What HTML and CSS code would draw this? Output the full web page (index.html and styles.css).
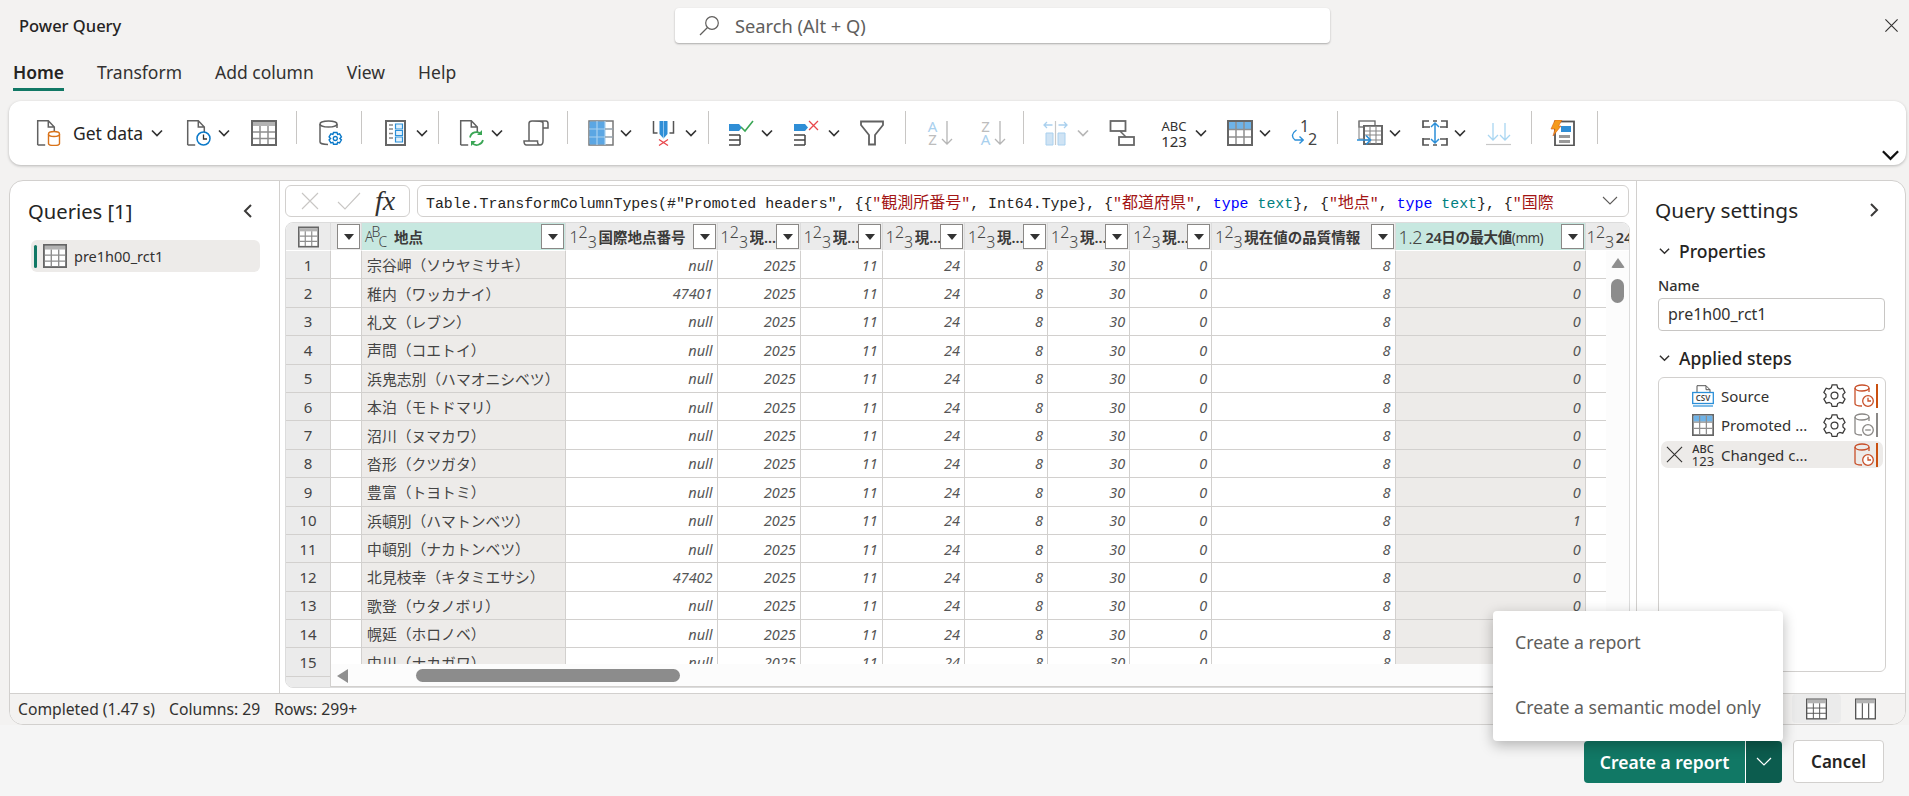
FILE: index.html
```html
<!DOCTYPE html>
<html lang="en">
<head>
<meta charset="utf-8">
<title>Power Query</title>
<link rel="stylesheet" href="styles.css">
</head>
<body>
<svg class="sprite" aria-hidden="true">
  <symbol id="i-doc" viewBox="0 0 26 26"><path d="M1.7 25V.8h10.6l6 6.2v5M12.3.8V7h6M1.7 25h7.5" fill="none" stroke="#616161" stroke-width="1.5"/></symbol>
  <symbol id="i-table" viewBox="0 0 26 26"><rect x="1" y="1" width="24" height="24" fill="#fff" stroke="#666" stroke-width="2"/><rect x="2" y="2" width="22" height="4" fill="#b3b3b3"/><path d="M2 12h22M2 18.500h22M9 6v18M17 6v18" stroke="#8f8f8f" stroke-width="1.500" fill="none"/></symbol>
  <symbol id="i-table-blue" viewBox="0 0 26 26"><rect x="1" y="1" width="24" height="24" fill="#fff" stroke="#666" stroke-width="2"/><rect x="2" y="2" width="22" height="7" fill="#6eb3e8"/><path d="M2 9.500h22M2 17h22M9 2v22M17 2v22" stroke="#8f8f8f" stroke-width="1.500" fill="none"/></symbol>
  <symbol id="i-chev" viewBox="0 0 12 8"><path d="M1 1.500l5 5 5-5" fill="none" stroke="#333" stroke-width="1.700"/></symbol>
  <symbol id="i-gear" viewBox="0 0 24 24"><path d="M9.500 1.500h5l.8 3 2.300 1.300 3-.9 2.400 4.300-2.200 2.200v2.600l2.200 2.200-2.400 4.300-3-.9-2.300 1.300-.8 3h-5l-.8-3-2.300-1.300-3 .9L.9 16.200l2.200-2.200v-2.600L.9 9.200l2.400-4.300 3 .9 2.300-1.300z" transform="translate(0 -.5)" fill="none" stroke="#3b3a39" stroke-width="1.300"/><circle cx="12" cy="12" r="3.600" fill="none" stroke="#3b3a39" stroke-width="1.300"/></symbol>
  <symbol id="i-db-clock" viewBox="0 0 20 24"><path d="M1 4v15.500c0 1.500 3 2.500 7 2.500M15 8V4" fill="none" stroke="#c8502a" stroke-width="1.300"/><ellipse cx="8" cy="4" rx="7" ry="3" fill="none" stroke="#c8502a" stroke-width="1.300"/><circle cx="14" cy="17" r="5.300" fill="#fff" stroke="#c8502a" stroke-width="1.300"/><path d="M14 13.800V17h3" fill="none" stroke="#c8502a" stroke-width="1.300"/></symbol>
  <symbol id="i-db-minus" viewBox="0 0 20 24"><path d="M1 4v15.500c0 1.500 3 2.500 7 2.500M15 8V4" fill="none" stroke="#8a8886" stroke-width="1.300"/><ellipse cx="8" cy="4" rx="7" ry="3" fill="none" stroke="#8a8886" stroke-width="1.300"/><circle cx="14" cy="17" r="5.300" fill="#fff" stroke="#8a8886" stroke-width="1.300"/><path d="M11.200 17h5.600" fill="none" stroke="#8a8886" stroke-width="1.300"/></symbol>
</svg>

<header class="titlebar">
  <div class="app-title">Power Query</div>
  <div class="search">
    <svg class="search-icon" viewBox="0 0 22 22"><circle cx="14" cy="8" r="6.300" fill="none" stroke="#605e5c" stroke-width="1.200"/><path d="M9.500 12.500L2 20" fill="none" stroke="#605e5c" stroke-width="1.200"/></svg>
    <span>Search (Alt + Q)</span>
  </div>
  <svg class="close" viewBox="0 0 16 16"><path d="M1.500 1.500l13 13M14.500 1.500l-13 13" stroke="#323130" stroke-width="1.200" fill="none"/></svg>
</header>

<nav class="tabs">
  <span class="tab active">Home</span>
  <span class="tab">Transform</span>
  <span class="tab">Add column</span>
  <span class="tab">View</span>
  <span class="tab">Help</span>
</nav>

<section class="ribbon">
  <div class="tools">
    <div class="tool">
      <svg class="ic" viewBox="0 0 26 26"><use href="#i-doc"/><path d="M12.500 14v9.500c0 1.500 2.500 2 5.500 2s5.500-.5 5.500-2V14" fill="#fff" stroke="#d9731a" stroke-width="1.400"/><ellipse cx="18" cy="14" rx="5.500" ry="2.500" fill="#fff" stroke="#d9731a" stroke-width="1.400"/></svg>
      <span class="tool-label">Get data</span>
      <svg class="chev c-wide"><use href="#i-chev"/></svg>
    </div>
    <div class="tool">
      <svg class="ic" viewBox="0 0 26 26"><use href="#i-doc"/><circle cx="17.500" cy="18.500" r="6.500" fill="#fff" stroke="#0a78c8" stroke-width="1.500"/><path d="M17.500 14.500v4.500h3.500" fill="none" stroke="#333" stroke-width="1.300"/></svg>
      <svg class="chev"><use href="#i-chev"/></svg>
    </div>
    <div class="tool"><svg class="ic"><use href="#i-table"/></svg></div>
    <div class="sep"></div>
    <div class="tool">
      <svg class="ic" viewBox="0 0 26 26"><path d="M2 4v18c0 1.500 4 2.500 8 2.500M19 8V4" fill="none" stroke="#616161" stroke-width="1.500"/><ellipse cx="10.500" cy="4" rx="8.500" ry="3" fill="none" stroke="#616161" stroke-width="1.500"/><path d="M15.500 12.500h3.500l.6 2 2-.6 1.800 3-1.500 1.500 1.500 1.500-1.800 3-2-.6-.6 2h-3.500l-.6-2-2 .6-1.800-3 1.500-1.500-1.500-1.500 1.800-3 2 .6z" fill="#fff" stroke="#0a78c8" stroke-width="1.400"/><circle cx="17.300" cy="18.500" r="2" fill="none" stroke="#0a78c8" stroke-width="1.300"/></svg>
    </div>
    <div class="sep"></div>
    <div class="tool">
      <svg class="ic" viewBox="0 0 26 26"><rect x="2" y="1" width="19" height="24" fill="#fff" stroke="#666" stroke-width="2"/><path d="M5 5h4M5 9h4M5 13.500h4M5 18h4" stroke="#888" stroke-width="1.300" fill="none"/><path d="M11.500 4h7v5h-7zM11.500 10.500h7v5h-7zM11.500 17h7v5h-7z" fill="#e3f1fb" stroke="#2b8fd8" stroke-width="1.200"/></svg>
      <svg class="chev"><use href="#i-chev"/></svg>
    </div>
    <div class="sep"></div>
    <div class="tool">
      <svg class="ic" viewBox="0 0 26 26"><use href="#i-doc"/><path d="M11 17.500a6.500 6.500 0 0 1 11-3.500M24 20a6.500 6.500 0 0 1-11 3" fill="none" stroke="#3aa655" stroke-width="1.700"/><path d="M23 10v5h-5zM12 26v-5h5z" fill="#3aa655"/></svg>
      <svg class="chev"><use href="#i-chev"/></svg>
    </div>
    <div class="tool">
      <svg class="ic" viewBox="0 0 26 26"><path d="M6 21V3.500C6 2 7 1 9 1h14c1.200 0 2 1 2 3v4h-5V3M9 1c8 0 11 0 11 2M20 8v13c0 2-1 4-3 4H3.500C2 25 1 24 1 21h13.500c0 2 .5 4 2.500 4" fill="none" stroke="#616161" stroke-width="1.500"/></svg>
    </div>
    <div class="sep"></div>
    <div class="tool">
      <svg class="ic" viewBox="0 0 26 26"><rect x="1" y="1" width="24" height="24" fill="#fff" stroke="#777" stroke-width="1.500"/><rect x="1.500" y="1.500" width="15.500" height="23" fill="#5ba6e3"/><path d="M1 9h24M1 17h24M9 1v24M17 1v24" stroke="#a8d0ef" stroke-width="1.200" fill="none"/><path d="M17 9h8M17 17h8" stroke="#888" stroke-width="1.200" fill="none"/></svg>
      <svg class="chev"><use href="#i-chev"/></svg>
    </div>
    <div class="tool">
      <svg class="ic" viewBox="0 0 26 26"><path d="M2.500 1v12h4M22.500 1v12h-4" fill="none" stroke="#555" stroke-width="1.500"/><path d="M8.500 1h8v13l-4 4.500-4-4.500z" fill="#2f8ed6"/><path d="M12.500 1v17" stroke="#8ec4ee" stroke-width="1"/><path d="M8 19.500l9 6M17 19.500l-9 6" stroke="#e8474c" stroke-width="1.300" fill="none"/></svg>
      <svg class="chev c-wide"><use href="#i-chev"/></svg>
    </div>
    <div class="sep"></div>
    <div class="tool">
      <svg class="ic" viewBox="0 0 26 26"><path d="M0 4h10l3 3.500-3 3.500H0z" fill="#2f8ed6"/><path d="M0 15h11M0 20h11M0 25h11M11 15v10" fill="none" stroke="#444" stroke-width="1.500"/><path d="M12 7l4 4 8-10" fill="none" stroke="#3aa655" stroke-width="1.600"/></svg>
      <svg class="chev"><use href="#i-chev"/></svg>
    </div>
    <div class="tool">
      <svg class="ic" viewBox="0 0 26 26"><path d="M0 4h11l3 3.500-3 3.500H0z" fill="#2f8ed6"/><path d="M0 15h11M0 20h11M0 25h11M11 15v10" fill="none" stroke="#444" stroke-width="1.500"/><path d="M15 1l9 9M24 1l-9 9" fill="none" stroke="#e8474c" stroke-width="1.300"/></svg>
      <svg class="chev c-wide"><use href="#i-chev"/></svg>
    </div>
    <div class="tool">
      <svg class="ic" viewBox="0 0 26 26"><path d="M2 1.500h22v3.500l-8 10v9.500h-6V15L2 5z" fill="#fff" stroke="#616161" stroke-width="1.800"/></svg>
    </div>
    <div class="sep"></div>
    <div class="tool sort-tool">
      <span class="letters"><span class="l-blue">A</span><span class="l-grey">Z</span></span>
      <svg class="sort-arrow" viewBox="0 0 12 26"><path d="M6 1v23M1 19l5 5 5-5" fill="none" stroke="#b5b5b5" stroke-width="1.300"/></svg>
    </div>
    <div class="tool sort-tool">
      <span class="letters"><span class="l-grey">Z</span><span class="l-blue">A</span></span>
      <svg class="sort-arrow" viewBox="0 0 12 26"><path d="M6 1v23M1 19l5 5 5-5" fill="none" stroke="#b5b5b5" stroke-width="1.300"/></svg>
    </div>
    <div class="sep"></div>
    <div class="tool">
      <svg class="ic" viewBox="0 0 26 26"><path d="M3 13h7v12H3zM15 13h7v12h-7z" fill="#cfe3f4" stroke="#a9d0ee" stroke-width="1"/><path d="M12.500 1v24" stroke="#c8c8c8" stroke-width="1.200" fill="none"/><path d="M9.500 5H1M4 2L1 5l3 3M15.500 5H24M21 2l3 3-3 3" fill="none" stroke="#a9d0ee" stroke-width="1.300"/></svg>
      <svg class="chev c-wide dim"><use href="#i-chev"/></svg>
    </div>
    <div class="tool">
      <svg class="ic" viewBox="0 0 26 26"><rect x="1.500" y="1" width="15" height="10" fill="#fff" stroke="#666" stroke-width="1.800"/><rect x="10" y="17" width="15" height="8" fill="#fff" stroke="#666" stroke-width="1.800"/><path d="M11 11l6 6" stroke="#666" stroke-width="1.500" fill="none"/></svg>
    </div>
    <div class="tool">
      <div class="abc"><span>ABC</span><span>123</span></div>
      <svg class="chev c-wide"><use href="#i-chev"/></svg>
    </div>
    <div class="tool">
      <svg class="ic"><use href="#i-table-blue"/></svg>
      <svg class="chev"><use href="#i-chev"/></svg>
    </div>
    <div class="tool">
      <svg class="rep-arrow" viewBox="0 0 13 17"><path d="M5.500 1C1 4 0 8 4 11h8M8.500 7.500l3.800 3.500-3.800 3.500" fill="none" stroke="#2b8fd8" stroke-width="1.400"/></svg>
      <span class="digits"><span class="d-one">1</span><span class="d-two">2</span></span>
    </div>
    <div class="sep"></div>
    <div class="tool">
      <svg class="ic" viewBox="0 0 26 26"><rect x="2" y="1" width="16" height="6" fill="#fff" stroke="#666" stroke-width="1.300"/><rect x="7" y="6" width="18" height="18" fill="#fff" stroke="#666" stroke-width="2"/><path d="M8 6.500h16M8 11h16M8 15h16M8 20h16M13 7v17M19 7v17M2 1v18h5" stroke="#888" stroke-width="1.100" fill="none"/><path d="M0 20h13M9 15.500l4.500 4.500L9 24.500" fill="none" stroke="#2b8fd8" stroke-width="1.600"/></svg>
      <svg class="chev"><use href="#i-chev"/></svg>
    </div>
    <div class="tool">
      <svg class="ic" viewBox="0 0 26 26"><path d="M1 8V1h6M11 1h4M19 1h6v7M1 18v7h6M11 25h4M19 25h6v-7M1 7h7M18 7h7M1 19h7M18 19h7" fill="none" stroke="#555" stroke-width="1.700"/><path d="M13 3v20M9 7l4-4 4 4M9 19l4 4 4-4" fill="none" stroke="#2b8fd8" stroke-width="1.500"/></svg>
      <svg class="chev"><use href="#i-chev"/></svg>
    </div>
    <div class="tool">
      <svg class="ic" viewBox="0 0 26 26"><path d="M7 3v17M2 15l5 5 5-5M19 3v17M14 15l5 5 5-5" fill="none" stroke="#a9d6f2" stroke-width="1.300"/><path d="M0 24.500h25" stroke="#c8c8c8" stroke-width="1.200" fill="none"/></svg>
    </div>
    <div class="sep"></div>
    <div class="tool">
      <svg class="ic" viewBox="0 0 26 26"><rect x="5" y="1.500" width="19" height="24" fill="#fff" stroke="#555" stroke-width="1.800"/><rect x="11" y="6" width="10" height="6" fill="#2f8ed6"/><rect x="9" y="15" width="11" height="3" fill="#999"/><rect x="9" y="20" width="11" height="3" fill="#999"/><path d="M5 0h7L8.500 6H11L3 16l2-7H1z" fill="#f59a1c" stroke="#d9601a" stroke-width=".6"/></svg>
    </div>
    <div class="sep"></div>
  </div>
  <svg class="ribbon-toggle" viewBox="0 0 20 12"><path d="M2 2l8 8 8-8" fill="none" stroke="#111" stroke-width="2.400"/></svg>
</section>

<main class="workspace">
  <div class="panes">
    <aside class="queries">
      <div class="queries-head">
        <h2>Queries [1]</h2>
        <svg class="pane-chev" viewBox="0 0 10 16"><path d="M8 2L2 8l6 6" fill="none" stroke="#3b3a39" stroke-width="2"/></svg>
      </div>
      <div class="query-item">
        <i class="query-mark"></i>
        <svg class="query-ic"><use href="#i-table"/></svg>
        <span>pre1h00_rct1</span>
      </div>
    </aside>

    <section class="center">
      <div class="formula">
        <div class="fx-box">
          <svg class="fx-ic" viewBox="0 0 18 18"><path d="M1 1l16 16M17 1L1 17" stroke="#c8c6c4" stroke-width="1.100" fill="none"/></svg>
          <svg class="fx-ic" viewBox="0 0 24 18"><path d="M1 10l7 7L23 1" stroke="#c8c6c4" stroke-width="1.100" fill="none"/></svg>
          <span class="fx-label">fx</span>
        </div>
        <div class="fx-input">
          <code>Table.TransformColumnTypes(#"Promoted headers", {{<span class="str">"<b>観測所番号</b>"</span>, Int64.Type}, {<span class="str">"<b>都道府県</b>"</span>, <span class="kw">type</span> <span class="ty-name">text</span>}, {<span class="str">"<b>地点</b>"</span>, <span class="kw">type</span> <span class="ty-name">text</span>}, {<span class="str">"<b>国際</b></span></code>
          <svg class="fx-chev" viewBox="0 0 16 10"><path d="M1 1l7 7 7-7" fill="none" stroke="#605e5c" stroke-width="1.100"/></svg>
        </div>
      </div>

      <div class="grid-wrap">
        <table class="grid">
          <colgroup><col class="w46"><col class="w31"><col class="w204"><col class="w151"><col class="w83"><col class="w82"><col class="w82"><col class="w83"><col class="w82"><col class="w82"><col class="w183"><col class="w190"><col class="w60"></colgroup>
          <thead>
            <tr>
              <th class="corner"><svg class="corner-ic"><use href="#i-table"/></svg></th>
              <th><div class="hd end"><button class="fbtn"></button></div></th>
              <th class="hsel"><div class="hd"><span class="ty letters-ty">A<sup>B</sup><sub>C</sub></span><span class="name">地点</span><button class="fbtn"></button></div></th>
              <th><div class="hd"><span class="ty">1<sup>2</sup><sub>3</sub></span><span class="name">国際地点番号</span><button class="fbtn"></button></div></th>
              <th><div class="hd"><span class="ty">1<sup>2</sup><sub>3</sub></span><span class="name">現...</span><button class="fbtn"></button></div></th>
              <th><div class="hd"><span class="ty">1<sup>2</sup><sub>3</sub></span><span class="name">現...</span><button class="fbtn"></button></div></th>
              <th><div class="hd"><span class="ty">1<sup>2</sup><sub>3</sub></span><span class="name">現...</span><button class="fbtn"></button></div></th>
              <th><div class="hd"><span class="ty">1<sup>2</sup><sub>3</sub></span><span class="name">現...</span><button class="fbtn"></button></div></th>
              <th><div class="hd"><span class="ty">1<sup>2</sup><sub>3</sub></span><span class="name">現...</span><button class="fbtn"></button></div></th>
              <th><div class="hd"><span class="ty">1<sup>2</sup><sub>3</sub></span><span class="name">現...</span><button class="fbtn"></button></div></th>
              <th><div class="hd"><span class="ty">1<sup>2</sup><sub>3</sub></span><span class="name">現在値の品質情報</span><button class="fbtn"></button></div></th>
              <th class="hsel"><div class="hd"><span class="ty dec">1.2</span><span class="name tight">24日の最大値<span class="mm">(mm)</span></span><button class="fbtn"></button></div></th>
              <th><div class="hd hd-last"><span class="ty">1<sup>2</sup><sub>3</sub></span><span class="name">24</span></div></th>
            </tr>
          </thead>
          <tbody>
            <tr><th>1</th><td></td><td class="place">宗谷岬（ソウヤミサキ）</td><td>null</td><td>2025</td><td>11</td><td>24</td><td>8</td><td>30</td><td>0</td><td>8</td><td class="sel">0</td><td></td></tr>
            <tr><th>2</th><td></td><td class="place">稚内（ワッカナイ）</td><td>47401</td><td>2025</td><td>11</td><td>24</td><td>8</td><td>30</td><td>0</td><td>8</td><td class="sel">0</td><td></td></tr>
            <tr><th>3</th><td></td><td class="place">礼文（レブン）</td><td>null</td><td>2025</td><td>11</td><td>24</td><td>8</td><td>30</td><td>0</td><td>8</td><td class="sel">0</td><td></td></tr>
            <tr><th>4</th><td></td><td class="place">声問（コエトイ）</td><td>null</td><td>2025</td><td>11</td><td>24</td><td>8</td><td>30</td><td>0</td><td>8</td><td class="sel">0</td><td></td></tr>
            <tr><th>5</th><td></td><td class="place">浜鬼志別（ハマオニシベツ）</td><td>null</td><td>2025</td><td>11</td><td>24</td><td>8</td><td>30</td><td>0</td><td>8</td><td class="sel">0</td><td></td></tr>
            <tr><th>6</th><td></td><td class="place">本泊（モトドマリ）</td><td>null</td><td>2025</td><td>11</td><td>24</td><td>8</td><td>30</td><td>0</td><td>8</td><td class="sel">0</td><td></td></tr>
            <tr><th>7</th><td></td><td class="place">沼川（ヌマカワ）</td><td>null</td><td>2025</td><td>11</td><td>24</td><td>8</td><td>30</td><td>0</td><td>8</td><td class="sel">0</td><td></td></tr>
            <tr><th>8</th><td></td><td class="place">沓形（クツガタ）</td><td>null</td><td>2025</td><td>11</td><td>24</td><td>8</td><td>30</td><td>0</td><td>8</td><td class="sel">0</td><td></td></tr>
            <tr><th>9</th><td></td><td class="place">豊富（トヨトミ）</td><td>null</td><td>2025</td><td>11</td><td>24</td><td>8</td><td>30</td><td>0</td><td>8</td><td class="sel">0</td><td></td></tr>
            <tr><th>10</th><td></td><td class="place">浜頓別（ハマトンベツ）</td><td>null</td><td>2025</td><td>11</td><td>24</td><td>8</td><td>30</td><td>0</td><td>8</td><td class="sel">1</td><td></td></tr>
            <tr><th>11</th><td></td><td class="place">中頓別（ナカトンベツ）</td><td>null</td><td>2025</td><td>11</td><td>24</td><td>8</td><td>30</td><td>0</td><td>8</td><td class="sel">0</td><td></td></tr>
            <tr><th>12</th><td></td><td class="place">北見枝幸（キタミエサシ）</td><td>47402</td><td>2025</td><td>11</td><td>24</td><td>8</td><td>30</td><td>0</td><td>8</td><td class="sel">0</td><td></td></tr>
            <tr><th>13</th><td></td><td class="place">歌登（ウタノボリ）</td><td>null</td><td>2025</td><td>11</td><td>24</td><td>8</td><td>30</td><td>0</td><td>8</td><td class="sel">0</td><td></td></tr>
            <tr><th>14</th><td></td><td class="place">幌延（ホロノベ）</td><td>null</td><td>2025</td><td>11</td><td>24</td><td>8</td><td>30</td><td>0</td><td>8</td><td class="sel">0</td><td></td></tr>
            <tr><th>15</th><td></td><td class="place">中川（ナカガワ）</td><td>null</td><td>2025</td><td>11</td><td>24</td><td>8</td><td>30</td><td>0</td><td>8</td><td class="sel">0</td><td></td></tr>
            <tr><th>16</th><td></td><td class="place"></td><td></td><td></td><td></td><td></td><td></td><td></td><td></td><td></td><td class="sel"></td><td></td></tr>
          </tbody>
        </table>
        <div class="vscroll"><i class="arrow-up"></i><i class="vthumb"></i></div>
        <div class="hscroll"><i class="arrow-left"></i><i class="hthumb"></i></div>
      </div>
    </section>

    <aside class="settings">
      <div class="settings-head">
        <h2>Query settings</h2>
        <svg class="pane-chev" viewBox="0 0 10 16"><path d="M2 2l6 6-6 6" fill="none" stroke="#3b3a39" stroke-width="2"/></svg>
      </div>
      <h3 class="section"><svg class="sec-chev" viewBox="0 0 12 8"><path d="M1 1.500l5 5 5-5" fill="none" stroke="#323130" stroke-width="1.600"/></svg>Properties</h3>
      <label class="field-label">Name</label>
      <div class="field">pre1h00_rct1</div>
      <h3 class="section steps-title"><svg class="sec-chev" viewBox="0 0 12 8"><path d="M1 1.500l5 5 5-5" fill="none" stroke="#323130" stroke-width="1.600"/></svg>Applied steps</h3>
      <div class="steps">
        <div class="step">
          <span></span>
          <svg class="step-ic" viewBox="0 0 22 22"><path d="M5 7V.7h9l4 4V7M14 .7v4h4" fill="none" stroke="#555" stroke-width="1"/><rect x=".7" y="7.500" width="20.600" height="11" fill="#fff" stroke="#2b8fd8" stroke-width="1.300"/><text x="11" y="16" class="csv">CSV</text><path d="M1 21h20" stroke="#2b8fd8" stroke-width="1.200"/></svg>
          <span class="step-name">Source</span>
          <svg class="gear"><use href="#i-gear"/></svg>
          <svg class="db"><use href="#i-db-clock"/></svg>
          <i class="bar orange"></i>
        </div>
        <div class="step">
          <span></span>
          <svg class="step-ic"><use href="#i-table-blue"/></svg>
          <span class="step-name">Promoted ...</span>
          <svg class="gear"><use href="#i-gear"/></svg>
          <svg class="db"><use href="#i-db-minus"/></svg>
          <i class="bar grey"></i>
        </div>
        <div class="step current">
          <svg class="step-x" viewBox="0 0 18 18"><path d="M1 1l16 16M17 1L1 17" stroke="#323130" stroke-width="1.200" fill="none"/></svg>
          <div class="abc small"><span>ABC</span><span>123</span></div>
          <span class="step-name">Changed c...</span>
          <span></span>
          <svg class="db"><use href="#i-db-clock"/></svg>
          <i class="bar orange"></i>
        </div>
      </div>
    </aside>
  </div>

  <footer class="status">
    <span>Completed (1.47 s)</span>
    <span>Columns: 29</span>
    <span>Rows: 299+</span>
    <div class="views">
      <span class="view on"><svg class="view-ic" viewBox="0 0 22 22"><rect x=".7" y=".7" width="20.600" height="20.600" fill="#fff" stroke="#555" stroke-width="1.400"/><rect x="1" y="1" width="20" height="4" fill="#b3b3b3"/><path d="M1 10h20M1 15.500h20M7.700 5v16M14.300 5v16" stroke="#555" stroke-width="1"/></svg></span>
      <span class="view"><svg class="view-ic" viewBox="0 0 22 22"><rect x=".7" y=".7" width="20.600" height="20.600" fill="#fff" stroke="#555" stroke-width="1.400"/><rect x="1" y="1" width="20" height="4" fill="#b3b3b3"/><path d="M7.700 5v16M14.300 5v16" stroke="#555" stroke-width="1.200"/></svg></span>
    </div>
  </footer>
</main>

<footer class="actions">
  <div class="menu">
    <div class="menu-item">Create a report</div>
    <div class="menu-item">Create a semantic model only</div>
  </div>
  <div class="split-btn">
    <span class="split-main">Create a report</span>
    <span class="split-drop"><svg class="drop-ic" viewBox="0 0 16 10"><path d="M1 1l7 7 7-7" fill="none" stroke="#fff" stroke-width="1.200"/></svg></span>
  </div>
  <button class="cancel">Cancel</button>
</footer>
</body>
</html>
```
FILE: styles.css
```css
* { box-sizing: border-box; }
html, body { margin: 0; padding: 0; }
body {
  width: 1909px;
  height: 796px;
  overflow: hidden;
  background: #f3f2f1;
  color: #252423;
  font-family: "Noto Sans", "Noto Sans CJK JP", sans-serif;
  font-size: 14px;
}
.sprite { display: none; }
h2, h3 { margin: 0; }

/* Title bar */
.titlebar {
  height: 52px;
  display: grid;
  grid-template-columns: 675px 655px 1fr;
  align-items: start;
}
.app-title { padding: 15px 0 0 19px; font-size: 16.500px; font-weight: 500; line-height: 22px; }
.search {
  margin-top: 8px;
  height: 35px;
  display: flex;
  align-items: center;
  background: #fff;
  border-radius: 4px;
  box-shadow: 0 1px 2px rgba(0,0,0,.3);
  color: #605e5c;
  font-size: 18.300px;
  padding-left: 23px;
}
.search-icon { width: 22px; height: 22px; margin-right: 15px; }
.close { width: 15px; height: 15px; margin: 18px 0 0 554px; }

/* Tabs */
.tabs { height: 40px; display: flex; gap: 33px; padding-left: 13px; }
.tab { height: 39px; padding-top: 9px; font-size: 17.500px; line-height: 23px; color: #323130; }
.tab.active { font-weight: 600; border-bottom: 3px solid #117865; color: #252423; }

/* Ribbon */
.ribbon {
  position: relative;
  margin: 9px 0 0 9px;
  width: 1897px;
  height: 64px;
  background: #fff;
  border-radius: 12px;
  box-shadow: 0 1px 3px rgba(0,0,0,.25);
  padding: 16px 0 0 27px;
}
.tools {
  display: grid;
  grid-template-columns: 150px 65px 45px 22px 43px 23px 54px 21px 64px 44px 21px 63px 57px 21px 65px 65px 46px 20px 53px 45px 20px 66px 52px 66px 64px 46px 20px 65px 64px 45px 19px 47px 2px;
  height: 32px;
  align-items: center;
}
.tool { display: flex; align-items: center; height: 32px; }
.ic { width: 26px; height: 26px; flex: none; }
.tool-label { margin-left: 11px; font-size: 17.500px; color: #252423; line-height: 24px; }
.chev { width: 12px; height: 8px; margin-left: 6px; flex: none; }
.c-wide { margin-left: 8px; }
.dim { opacity: .35; }
.sep { width: 1px; height: 33px; background: #c8c6c4; align-self: start; margin-top: -6px; }
.abc { display: flex; flex-direction: column; align-items: center; width: 26px; font-size: 13px; line-height: 14px; color: #323130; }
.abc span { height: 14px; }
.abc span + span { font-size: 15px; margin-top: 1px; }
.abc.small { font-size: 11px; line-height: 13px; font-weight: 500; width: 22px; }
.abc.small span { height: 12px; }
.abc.small span + span { font-size: 13px; font-weight: 400; }

.sort-tool { gap: 3px; }
.letters { display: flex; flex-direction: column; align-items: center; width: 11px; margin-left: 2px; font-size: 15px; line-height: 13px; }
.l-blue { color: #a9d0ee; }
.l-grey { color: #bdbdbd; }
.sort-arrow { width: 12px; height: 26px; }
.rep-arrow { width: 13px; height: 17px; margin-top: 9px; flex: none; }
.digits { display: grid; grid-template-columns: 8px 9px; height: 26px; margin-left: -4px; font-size: 16px; line-height: 13px; color: #444; }
.d-one { align-self: start; }
.d-two { align-self: end; }
.csv { font-family: "Noto Sans", sans-serif; font-size: 8px; font-weight: 600; text-anchor: middle; fill: #444; }
.ribbon-toggle { position: absolute; right: 6px; bottom: 4px; width: 19px; height: 12px; }

/* Workspace */
.workspace {
  margin: 15px 0 0 9px;
  width: 1897px;
  height: 545px;
  background: #fff;
  border: 1px solid #d2d0ce;
  border-radius: 14px;
  overflow: hidden;
  display: flex;
  flex-direction: column;
}
.panes { flex: 1; display: flex; min-height: 0; }

.queries { width: 270px; flex: none; border-right: 1px solid #d2d0ce; padding: 0 19px 0 21px; }
.queries-head { display: flex; align-items: center; justify-content: space-between; height: 59px; margin-left: -3px; padding-right: 7px; }
.queries-head h2, .settings-head h2 { font-size: 20.200px; font-weight: 400; line-height: 28px; color: #252423; }
.settings-head h2 { font-size: 20.800px; }
.pane-chev { width: 10px; height: 16px; }
.query-item {
  height: 32px;
  width: 229px;
  display: flex;
  align-items: center;
  background: #edebe9;
  border-radius: 6px;
  color: #323130;
  font-size: 14.500px;
}
.query-mark { width: 3px; height: 23px; background: #117865; border-radius: 2px; margin-left: 3px; }
.query-ic { width: 24px; height: 24px; margin: 0 7px 0 6px; }

/* Center */
.center { width: 1356px; flex: none; padding: 4px 5px 0 5px; display: flex; flex-direction: column; }
.formula { display: flex; gap: 7px; height: 32px; }
.fx-box, .fx-input { border: 1px solid #d2d0ce; border-radius: 6px; height: 32px; display: flex; align-items: center; background: #fff; }
.fx-box { width: 125px; flex: none; padding-left: 15px; }
.fx-ic { width: 18px; height: 18px; }
.fx-ic + .fx-ic { width: 24px; margin-left: 18px; }
.fx-label { font-family: "Liberation Serif", serif; font-style: italic; font-size: 28px; margin-left: 14px; line-height: 28px; color: #323130; }
.fx-input { width: 1212px; padding-left: 8px; justify-content: space-between; padding-right: 10px; }
code { font-family: "Liberation Mono", monospace; font-size: 14.880px; color: #252423; white-space: pre; }
code b { font-family: "Noto Sans CJK JP", sans-serif; font-size: 16px; font-weight: 400; }
.str { color: #a31515; }
.kw { color: #0000ff; }
.ty-name { color: #008080; }
.fx-chev { width: 16px; height: 10px; }

.grid-wrap {
  position: relative;
  margin-top: 5px;
  width: 1345px;
  height: 466px;
  overflow: hidden;
  border: 1px solid #dcdcdc;
  border-radius: 8px 8px 4px 8px;
}
.grid { table-layout: fixed; width: 1360px; border-collapse: separate; border-spacing: 0; }
.w46 { width: 45px; } .w31 { width: 31px; } .w204 { width: 204px; } .w151 { width: 151px; }
.w83 { width: 83px; } .w82 { width: 82px; } .w183 { width: 183px; } .w190 { width: 190px; } .w60 { width: 60px; }
.grid thead th { height: 28px; padding: 0; background: #ebebeb; border-right: 1px solid #dcdcdc; border-bottom: 1px solid #fff; font-weight: 400; }
.grid thead th.hsel { background: #c7e8e0; }
.grid thead th.corner { background: #ebebeb; }
.corner-ic { width: 21px; height: 24px; display: block; margin: 1px auto 0; }
.hd { display: flex; align-items: center; height: 27px; padding: 0 1px 0 3px; }
.hd.end { justify-content: flex-end; padding-right: 1px; }
.hd-last { padding-left: 1px; }
.ty { position: relative; flex: none; width: 23px; height: 24px; font-size: 16px; line-height: 24px; font-weight: 300; color: #444; text-align: left; margin-right: 6px; }
.ty sup, .ty sub { font-size: 16px; line-height: 0; position: relative; vertical-align: baseline; }
.ty sup { top: -5px; }
.ty sub { top: 5px; }
.ty.letters-ty { font-size: 14px; letter-spacing: -2px; }
.ty.letters-ty sup, .ty.letters-ty sub { font-size: 14px; }
.ty.dec { font-size: 18px; width: 24px; margin-right: 3px; letter-spacing: -.5px; }
.name { flex: 1; min-width: 0; font-size: 14.500px; font-weight: 600; color: #3b3a39; text-align: left; white-space: nowrap; overflow: hidden; }
.name.tight { letter-spacing: -.4px; }
.mm { font-weight: 400; font-size: 13.500px; letter-spacing: -.5px; }
.fbtn { flex: none; width: 23px; height: 25px; padding: 0; border: 1px solid #8a8886; background: #fff; position: relative; }
.fbtn::after { content: ""; position: absolute; left: 6px; top: 9px; border: 5px solid transparent; border-top: 6px solid #333; border-bottom: 0; }
.grid tbody th, .grid tbody td { height: 28.400px; padding: 0; border-right: 1px solid #d2d0ce; border-bottom: 1px solid #d2d0ce; overflow: hidden; white-space: nowrap; }
.grid tbody th { background: #ebebeb; font-weight: 400; font-size: 15px; color: #444; text-align: center; }
.grid tbody td { padding-right: 4px; text-align: right; font-style: italic; font-size: 14.500px; color: #555; }
.grid tbody td.place { background: #edebe9; font-style: normal; text-align: left; padding: 0 0 0 5px; font-size: 14.800px; color: #444; }
.grid tbody td.sel { background: #edebe9; }

.vscroll { position: absolute; top: 28px; right: 0; bottom: 23px; width: 23px; background: #fcfcfc; }
.arrow-up { position: absolute; left: 5px; top: 7px; border: 7px solid transparent; border-bottom: 10px solid #8f8f8f; border-top: 0; border-radius: 2px; }
.vthumb { position: absolute; left: 5px; top: 28px; width: 13px; height: 24px; border-radius: 7px; background: #8c8c8c; }
.hscroll { position: absolute; left: 45px; right: 0; bottom: 0; height: 23px; background: #fcfcfc; border-bottom: 1px solid #d2d0ce; }
.arrow-left { position: absolute; left: 6px; top: 5px; border: 7px solid transparent; border-right: 11px solid #8f8f8f; border-left: 0; }
.hthumb { position: absolute; left: 85px; top: 5px; width: 264px; height: 13px; border-radius: 7px; background: #8c8c8c; }

/* Settings */
.settings { flex: 1; min-width: 0; border-left: 1px solid #d2d0ce; padding: 0 20px 0 21px; }
.settings-head { display: flex; align-items: center; justify-content: space-between; height: 58px; margin-left: -3px; padding-right: 6px; }
.section { display: flex; align-items: center; height: 24px; font-size: 17.500px; font-weight: 500; color: #252423; margin-left: 0; }
.sec-chev { width: 11px; height: 8px; margin: 0 9px 0 1px; }
.field-label { display: block; margin-top: 12px; font-size: 14.500px; font-weight: 500; line-height: 20px; color: #323130; }
.field { margin-top: 3px; height: 33px; width: 227px; border: 1px solid #c8c6c4; border-radius: 4px; padding-left: 9px; line-height: 31px; font-size: 16px; color: #323130; }
.steps-title { margin-top: 15px; }
.steps { margin-top: 7px; width: 228px; height: 295px; border: 1px solid #d2d0ce; border-radius: 6px; padding: 4px 2px; display: flex; flex-direction: column; gap: 2.500px; }
.step { display: grid; grid-template-columns: 31px 29px 102px 31px 22px 3px; align-items: center; height: 27px; border-radius: 7px; }
.step.current { background: #edebe9; }
.step-ic { width: 22px; height: 22px; }
.step-x { width: 17px; height: 17px; margin-left: 5px; }
.step-name { font-size: 15px; color: #323130; white-space: nowrap; }
.gear { width: 23px; height: 23px; }
.db { width: 20px; height: 24px; }
.bar { width: 2px; height: 24px; }
.bar.orange { background: #ca5010; }
.bar.grey { background: #8a8886; }

/* Status */
.status {
  height: 31px;
  flex: none;
  background: #f3f2f1;
  border-top: 1px solid #d2d0ce;
  display: flex;
  align-items: center;
  gap: 14px;
  padding-left: 8px;
  font-size: 15.700px;
  color: #323130;
  position: relative;
}
.views { position: absolute; right: 15px; top: 0; display: flex; }
.view { width: 49px; height: 29px; display: flex; align-items: center; justify-content: center; border-radius: 4px; }
.view.on { background: #ebebeb; }
.view-ic { width: 21px; height: 22px; }

/* Actions */
.actions {
  position: relative;
  height: 71px;
  background: #f5f5f5;
  display: flex;
  justify-content: flex-end;
  align-items: flex-start;
  gap: 11px;
  padding: 16px 25px 0 0;
}
.menu {
  position: absolute;
  right: 126px;
  bottom: 55px;
  width: 290px;
  height: 130px;
  background: #fff;
  border-radius: 4px;
  box-shadow: 0 4px 14px rgba(0,0,0,.28);
  padding: 0 22px;
  color: #605e5c;
  font-size: 17.700px;
}
.menu-item { height: 65px; line-height: 63px; white-space: nowrap; }
.split-btn { display: flex; width: 198px; height: 42px; border-radius: 4px; overflow: hidden; color: #fff; font-weight: 600; font-size: 17.500px; }
.split-main { width: 162px; background: #117865; border-right: 1px solid #fff; display: flex; align-items: center; justify-content: center; }
.split-drop { flex: 1; background: #0c5c4e; display: flex; align-items: center; justify-content: center; }
.drop-ic { width: 16px; height: 10px; }
.cancel { width: 91px; height: 43px; margin-top: -1px; background: #fff; border: 1px solid #d2d0ce; border-radius: 4px; font: 600 17px "Noto Sans", sans-serif; color: #252423; }
```
